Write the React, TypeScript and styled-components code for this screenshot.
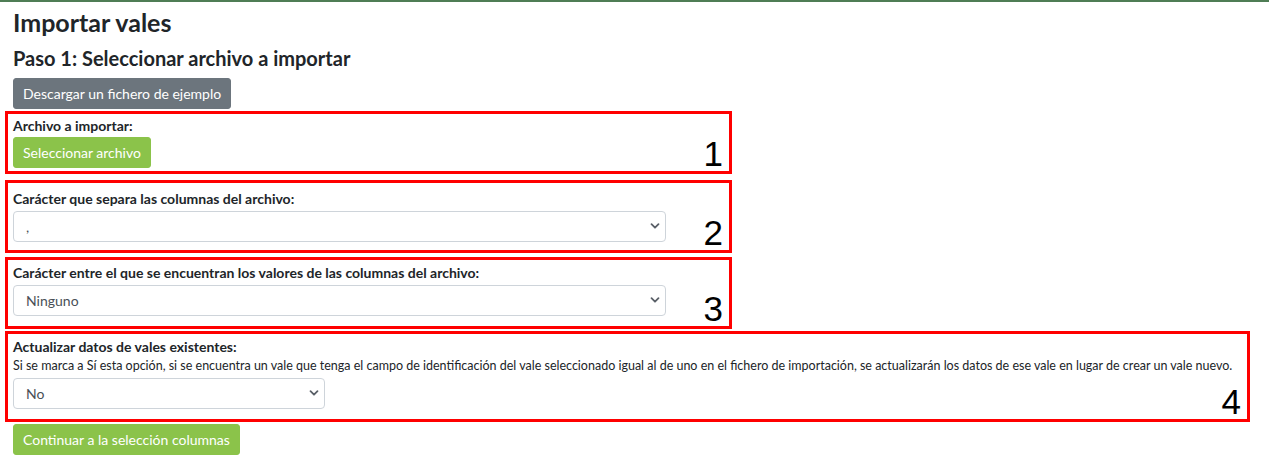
import styled, { createGlobalStyle } from "styled-components";

const GlobalStyle = createGlobalStyle`
  body {
    margin: 0;
    background: #fff;
    font-family: Lato, "Open Sans", sans-serif;
    color: #212529;
  }
`;

interface Field {
  label: string;
  help?: string;
  value: string;
  options: string[];
  width: number;
  mt: number;
  pt: number;
  pb: number;
  marker: string;
  wide?: boolean;
}

const fields: Field[] = [
  {
    label: "Carácter que separa las columnas del archivo:",
    value: ",",
    options: [",", ";", "Tabulador"],
    width: 653,
    mt: 6,
    pt: 6,
    pb: 8,
    marker: "2",
  },
  {
    label:
      "Carácter entre el que se encuentran los valores de las columnas del archivo:",
    value: "Ninguno",
    options: ["Ninguno", '"', "'"],
    width: 653,
    mt: 4,
    pt: 3,
    pb: 10,
    marker: "3",
  },
  {
    label: "Actualizar datos de vales existentes:",
    help:
      "Si se marca a Sí esta opción, si se encuentra un vale que tenga el campo de identificación del vale seleccionado igual al de uno en el fichero de importación, se actualizarán los datos de ese vale en lugar de crear un vale nuevo.",
    value: "No",
    options: ["No", "Sí"],
    width: 312,
    mt: 2,
    pt: 3,
    pb: 10,
    marker: "4",
    wide: true,
  },
];

function Chevron() {
  return (
    <ChevronIcon width="10" height="10" viewBox="0 0 10 10">
      <path
        d="M1.5 3.2 L5 6.7 L8.5 3.2"
        fill="none"
        stroke="#5a6068"
        strokeWidth="1.8"
        strokeLinecap="round"
        strokeLinejoin="round"
      />
    </ChevronIcon>
  );
}

export default function App() {
  return (
    <>
      <GlobalStyle />
      <Page>
        <Title>Importar vales</Title>
        <Subtitle>Paso 1: Seleccionar archivo a importar</Subtitle>
        <Button $variant="gray">Descargar un fichero de ejemplo</Button>

        <Section $mt={2}>
          <Body $pt={2} $pb={3}>
            <Label>Archivo a importar:</Label>
            <Button $variant="green">Seleccionar archivo</Button>
          </Body>
          <Marker>1</Marker>
        </Section>

        {fields.map((f) => (
          <Section key={f.marker} $mt={f.mt} $wide={f.wide}>
            <Body $pt={f.pt} $pb={f.pb}>
              <Label>{f.label}</Label>
              {f.help && <Help>{f.help}</Help>}
              <SelectWrap $width={f.width}>
                <Select defaultValue={f.value}>
                  {f.options.map((o) => (
                    <option key={o} value={o}>
                      {o}
                    </option>
                  ))}
                </Select>
                <Chevron />
              </SelectWrap>
            </Body>
            <Marker>{f.marker}</Marker>
          </Section>
        ))}

        <Footer>
          <Button $variant="green">Continuar a la selección columnas</Button>
        </Footer>
      </Page>
    </>
  );
}

const Page = styled.div`
  border-top: 2px solid #4f7d55;
  padding: 0 19px 0 13px;
  display: flex;
  flex-direction: column;
  align-items: flex-start;
`;

const Title = styled.h1`
  font-size: 25px;
  font-weight: 700;
  line-height: 30px;
  margin: 5px 0 9px;
  color: #212529;
`;

const Subtitle = styled.h2`
  font-size: 20px;
  font-weight: 700;
  line-height: 24px;
  margin: 0 0 8px;
  color: #212529;
`;

const Button = styled.button<{ $variant: "gray" | "green" }>`
  font-family: Lato, "Open Sans", sans-serif;
  font-size: 14px;
  line-height: 19px;
  height: 31px;
  padding: 5px 9px;
  border: 1px solid
    ${(p) => (p.$variant === "gray" ? "#6c757d" : "#8bc34a")};
  border-radius: 3px;
  background: ${(p) => (p.$variant === "gray" ? "#6c757d" : "#8bc34a")};
  color: #fff;
  cursor: pointer;
`;

const Section = styled.div<{ $wide?: boolean; $mt: number }>`
  box-sizing: border-box;
  display: grid;
  grid-template-areas: "main";
  align-self: ${(p) => (p.$wide ? "stretch" : "flex-start")};
  width: ${(p) => (p.$wide ? "auto" : "727px")};
  margin: ${(p) => p.$mt}px 0 0 -8px;
  padding: 0 6px 0 5px;
  border: 3px solid #ff0000;
`;

const Body = styled.div<{ $pt: number; $pb: number }>`
  grid-area: main;
  display: flex;
  flex-direction: column;
  align-items: flex-start;
  padding: ${(p) => p.$pt}px 0 ${(p) => p.$pb}px;
`;

const Label = styled.label`
  font-size: 14px;
  font-weight: 700;
  line-height: 20px;
  color: #212529;
  margin-bottom: 1px;
`;

const Help = styled.div`
  font-size: 12.5px;
  line-height: 14px;
  white-space: nowrap;
  color: #212529;
  margin: 1px 0 4px;
`;

const SelectWrap = styled.div<{ $width: number }>`
  position: relative;
  width: ${(p) => p.$width}px;
  margin-top: 1px;
`;

const Select = styled.select`
  box-sizing: border-box;
  width: 100%;
  height: 31px;
  appearance: none;
  font-family: Lato, "Open Sans", sans-serif;
  font-size: 14px;
  color: #495057;
  background: #fff;
  border: 1px solid #ced4da;
  border-radius: 4px;
  padding: 0 24px 0 12px;
`;

const ChevronIcon = styled.svg`
  position: absolute;
  right: 6px;
  top: 10px;
  pointer-events: none;
`;

const Marker = styled.div`
  grid-area: main;
  justify-self: end;
  align-self: end;
  font-family: "Liberation Sans", sans-serif;
  font-size: 35px;
  line-height: 1;
  color: #000;
`;

const Footer = styled.div`
  margin-top: 2px;
`;
